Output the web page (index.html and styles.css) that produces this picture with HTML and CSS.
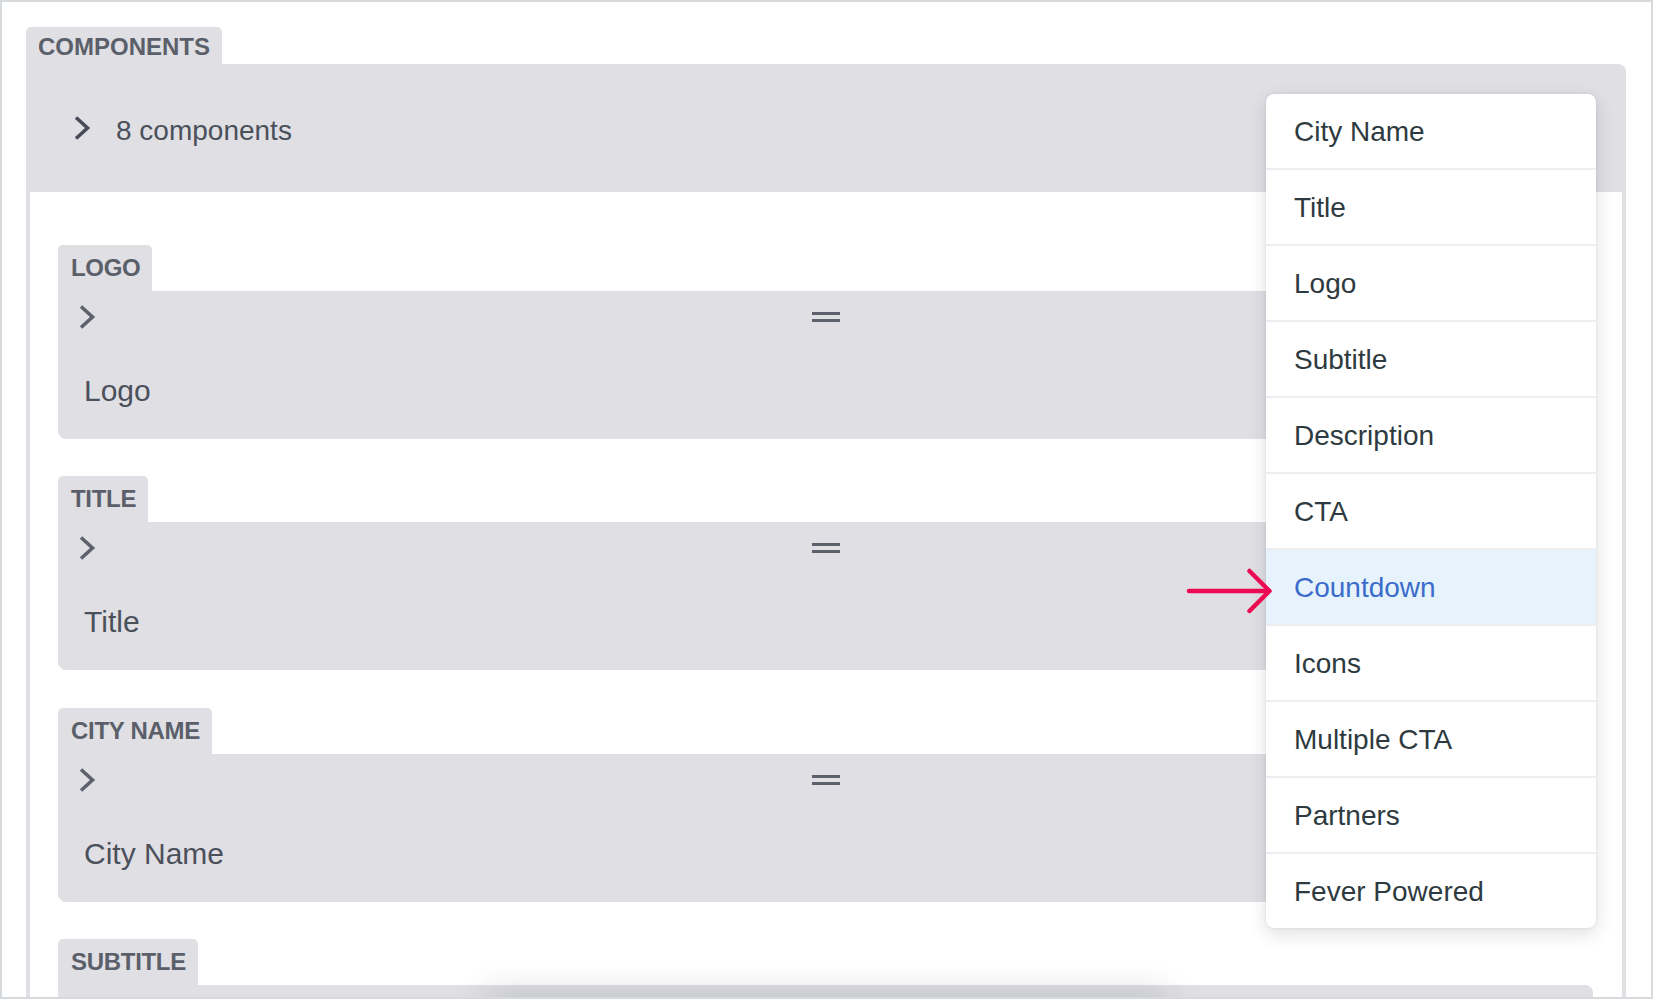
FILE: index.html
```html
<!DOCTYPE html>
<html lang="en">
<head>
<meta charset="utf-8">
<title>Components</title>
<link rel="stylesheet" href="styles.css">
</head>
<body>
<div class="frame">
  <section class="panel">
    <div class="tab tab-lg">COMPONENTS</div>
    <div class="panel-head">
      <svg class="chev" width="18" height="26" viewBox="0 0 18 26"><polyline points="3,2.5 14.5,13 3,23.5" fill="none" stroke="currentColor" stroke-width="3.6"/></svg>
      <span class="count">8 components</span>
    </div>
    <div class="panel-body">
      <div class="block">
        <div class="tab">LOGO</div>
        <div class="card">
          <div class="card-top">
            <svg class="chev chev-card" width="18" height="26" viewBox="0 0 18 26"><polyline points="3,2.5 14.5,13 3,23.5" fill="none" stroke="currentColor" stroke-width="3.6"/></svg>
            <span class="handle"></span>
          </div>
          <div class="card-label">Logo</div>
        </div>
      </div>
      <div class="block">
        <div class="tab">TITLE</div>
        <div class="card">
          <div class="card-top">
            <svg class="chev chev-card" width="18" height="26" viewBox="0 0 18 26"><polyline points="3,2.5 14.5,13 3,23.5" fill="none" stroke="currentColor" stroke-width="3.6"/></svg>
            <span class="handle"></span>
          </div>
          <div class="card-label">Title</div>
        </div>
      </div>
      <div class="block">
        <div class="tab">CITY NAME</div>
        <div class="card">
          <div class="card-top">
            <svg class="chev chev-card" width="18" height="26" viewBox="0 0 18 26"><polyline points="3,2.5 14.5,13 3,23.5" fill="none" stroke="currentColor" stroke-width="3.6"/></svg>
            <span class="handle"></span>
          </div>
          <div class="card-label">City Name</div>
        </div>
      </div>
      <div class="block">
        <div class="tab">SUBTITLE</div>
        <div class="card card-clipped">
          <div class="card-top">
            <svg class="chev chev-card" width="18" height="26" viewBox="0 0 18 26"><polyline points="3,2.5 14.5,13 3,23.5" fill="none" stroke="currentColor" stroke-width="3.6"/></svg>
            <span class="handle"></span>
          </div>
        </div>
      </div>
    </div>
    <ul class="menu">
      <li class="menu-item">City Name</li>
      <li class="menu-item">Title</li>
      <li class="menu-item">Logo</li>
      <li class="menu-item">Subtitle</li>
      <li class="menu-item">Description</li>
      <li class="menu-item">CTA</li>
      <li class="menu-item is-active">Countdown</li>
      <li class="menu-item">Icons</li>
      <li class="menu-item">Multiple CTA</li>
      <li class="menu-item">Partners</li>
      <li class="menu-item">Fever Powered</li>
    </ul>
    <svg class="arrow" width="92" height="48" viewBox="0 0 92 48"><line x1="5" y1="24" x2="85" y2="24" stroke="currentColor" stroke-width="4.5" stroke-linecap="round"/><polyline points="65.5,4 85.5,24 65.5,44" fill="none" stroke="currentColor" stroke-width="4.5" stroke-linecap="round" stroke-linejoin="round"/></svg>
  </section>
  <div class="ghost"></div>
</div>
</body>
</html>
```

FILE: styles.css
```css
* {
  box-sizing: border-box;
}

html, body {
  margin: 0;
  padding: 0;
  background: #ffffff;
}

body {
  font-family: "Liberation Sans", Arial, Helvetica, sans-serif;
}

.frame {
  position: relative;
  width: 1653px;
  height: 999px;
  border: 2px solid #d7dadd;
  background: #ffffff;
  overflow: hidden;
  padding: 25px 0 0 24px;
}

.panel {
  position: relative;
  width: 1600px;
}

.tab {
  display: inline-block;
  vertical-align: top;
  background: #dfdfe4;
  color: #5b5f6a;
  font-weight: 700;
  font-size: 24px;
  letter-spacing: -0.3px;
  height: 46px;
  line-height: 46px;
  padding: 0 12px 0 13px;
  border-radius: 5px 5px 0 0;
}

.tab-lg {
  height: 37px;
  line-height: 35px;
  letter-spacing: 0;
  padding: 2px 12px 0;
}

.panel-head {
  display: flex;
  align-items: center;
  height: 128px;
  background: #dfdfe4;
  border-radius: 0 8px 0 0;
  padding-left: 47px;
  gap: 25px;
}

.chev {
  display: block;
  color: #474c58;
  flex: none;
}

.count {
  font-size: 28px;
  line-height: 32px;
  color: #4b505b;
  margin-top: 5px;
}

.panel-body {
  background: #ffffff;
  border-left: 4px solid #dfdfe4;
  border-right: 4px solid #dfdfe4;
  padding: 53px 29px 0 28px;
  height: 900px;
}

.block {
  margin-bottom: 37.4px;
}

.card {
  height: 148px;
  background: #dfdfe4;
  border-radius: 0 8px 8px 8px;
}

.card-top {
  display: grid;
  grid-template-columns: 1fr auto 1fr;
  align-items: start;
}

.chev-card {
  color: #5d616c;
  margin: 13px 0 0 20px;
}

.handle {
  display: block;
  width: 28px;
  height: 10px;
  margin-top: 21px;
  border-top: 3px solid #5d616c;
  border-bottom: 3px solid #5d616c;
}

.card-label {
  margin-top: 44px;
  padding-left: 26px;
  font-size: 30px;
  line-height: 34px;
  color: #4b505b;
}

.menu {
  position: absolute;
  left: 1240px;
  top: 67px;
  width: 330px;
  margin: 0;
  padding: 0;
  list-style: none;
  background: #ffffff;
  border-radius: 8px;
  overflow: hidden;
  box-shadow: 0 6px 18px rgba(30, 35, 50, 0.14), 0 0 3px rgba(30, 35, 50, 0.10);
  z-index: 2;
}

.menu-item {
  height: 76px;
  padding: 22px 28px 0;
  font-size: 28px;
  line-height: 32px;
  color: #2e3a40;
  border-top: 2px solid #eceef2;
}

.menu-item:first-child {
  height: 74px;
  padding-top: 22px;
  border-top: none;
}

.menu-item.is-active {
  background: #e6f3fd;
  color: #3b6ccb;
}

.arrow {
  position: absolute;
  left: 1158px;
  top: 540px;
  color: #ec0b52;
  z-index: 3;
}

.ghost {
  position: absolute;
  left: 488px;
  top: 996px;
  width: 672px;
  height: 40px;
  border-radius: 8px;
  background: #d4d4da;
  box-shadow: 0 0 34px 6px rgba(40, 40, 60, 0.16);
  z-index: 4;
}
```
